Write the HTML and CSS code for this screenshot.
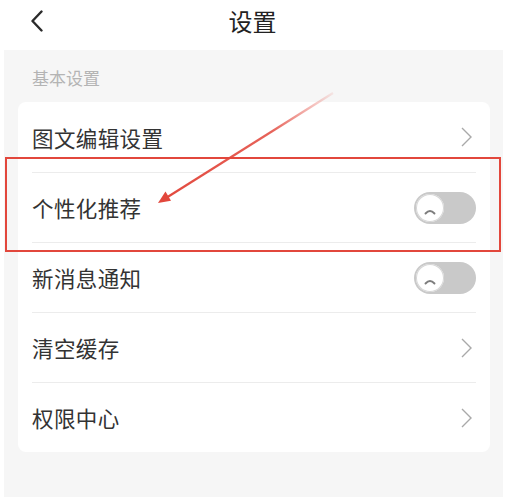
FILE: index.html
```html
<!DOCTYPE html>
<html lang="zh-CN">
<head>
<meta charset="utf-8">
<title>设置</title>
<link rel="stylesheet" href="styles.css">
</head>
<body>
<div class="page">
  <header class="topbar">
    <svg class="back" width="14" height="22" viewBox="0 0 14 22"><path d="M11.5 1.5 L2.5 11 L11.5 20.5" fill="none" stroke="#2b2b2b" stroke-width="2.4" stroke-linecap="round" stroke-linejoin="round"/></svg>
    <h1 class="title">设置</h1>
  </header>
  <main class="content">
    <div class="section-label">基本设置</div>
    <div class="card">
      <div class="row no-line"><span class="label">图文编辑设置</span><svg class="chev" width="11" height="20" viewBox="0 0 11 20"><path d="M1 1 L10 10 L1 19" fill="none" stroke="#a9a9a9" stroke-width="1.4"/></svg></div>
      <div class="row"><span class="label">个性化推荐</span><span class="switch"><span class="knob"><svg width="28" height="28" viewBox="0 0 28 28"><path d="M9.5 19.5 Q14 14.5 18.5 19.5" fill="none" stroke="#7d7d7d" stroke-width="1.9" stroke-linecap="round"/></svg></span></span></div>
      <div class="row"><span class="label">新消息通知</span><span class="switch"><span class="knob"><svg width="28" height="28" viewBox="0 0 28 28"><path d="M9.5 19.5 Q14 14.5 18.5 19.5" fill="none" stroke="#7d7d7d" stroke-width="1.9" stroke-linecap="round"/></svg></span></span></div>
      <div class="row"><span class="label">清空缓存</span><svg class="chev" width="11" height="20" viewBox="0 0 11 20"><path d="M1 1 L10 10 L1 19" fill="none" stroke="#a9a9a9" stroke-width="1.4"/></svg></div>
      <div class="row last"><span class="label">权限中心</span><svg class="chev" width="11" height="20" viewBox="0 0 11 20"><path d="M1 1 L10 10 L1 19" fill="none" stroke="#a9a9a9" stroke-width="1.4"/></svg></div>
    </div>
  </main>
  <div class="highlight"></div>
  <svg class="arrow" width="505" height="497" viewBox="0 0 505 497">
    <defs>
      <linearGradient id="fade" x1="333" y1="93" x2="158" y2="203" gradientUnits="userSpaceOnUse">
        <stop offset="0" stop-color="#e2473c" stop-opacity="0.1"/>
        <stop offset="0.35" stop-color="#e2473c" stop-opacity="0.85"/>
        <stop offset="1" stop-color="#e2473c" stop-opacity="1"/>
      </linearGradient>
    </defs>
    <line x1="333" y1="93" x2="166" y2="198" stroke="url(#fade)" stroke-width="2.2"/>
    <polygon points="158,203 171,200.8 165.5,191.6" fill="#e2473c"/>
  </svg>
</div>
</body>
</html>
```
FILE: styles.css
```css
html, body {
  margin: 0;
  padding: 0;
  background: #ffffff;
}
body {
  font-family: "Noto Sans CJK SC", "Noto Sans", sans-serif;
  color: #333333;
}
.page {
  position: relative;
  width: 505px;
  height: 497px;
  overflow: hidden;
}
.topbar {
  position: relative;
  height: 41px;
  margin-bottom: 9px;
  display: flex;
  align-items: center;
  justify-content: center;
}
.back {
  position: absolute;
  left: 30px;
  top: 10px;
}
.title {
  margin: 0;
  font-size: 24px;
  font-weight: 400;
  color: #222222;
  line-height: 41px;
}
.content {
  margin: 0 2px 0 4px;
  background: #f6f6f6;
  height: 447px;
  padding-top: 1px;
  box-sizing: border-box;
}
.section-label {
  padding: 17px 0 14px 28px;
  font-size: 17px;
  line-height: 20px;
  color: #b4b4b4;
}
.card {
  margin: 0 13px 0 14px;
  background: #ffffff;
  border-radius: 8px;
  padding: 0 14px;
}
.row {
  height: 70px;
  display: flex;
  align-items: center;
  justify-content: space-between;
  border-top: 1px solid #ececec;
  box-sizing: border-box;
}
.row.no-line {
  border-top: none;
}
.label {
  font-size: 21.5px;
  color: #333333;
  letter-spacing: 0.4px;
}
.chev {
  margin-right: 4px;
}
.switch {
  width: 62px;
  height: 32px;
  border-radius: 16px;
  background: #c9c9c9;
  display: flex;
  align-items: center;
  padding-left: 2px;
  box-sizing: border-box;
}
.knob {
  width: 28px;
  height: 28px;
  border-radius: 50%;
  background: #ffffff;
  box-shadow: inset 0 0 0 1px #d6d6d6;
  display: block;
}
.knob svg {
  display: block;
}
.highlight {
  position: absolute;
  left: 5px;
  top: 157px;
  width: 496px;
  height: 95px;
  border: 2px solid #e2473c;
  box-sizing: border-box;
}
.arrow {
  position: absolute;
  left: 0;
  top: 0;
  pointer-events: none;
}
```
